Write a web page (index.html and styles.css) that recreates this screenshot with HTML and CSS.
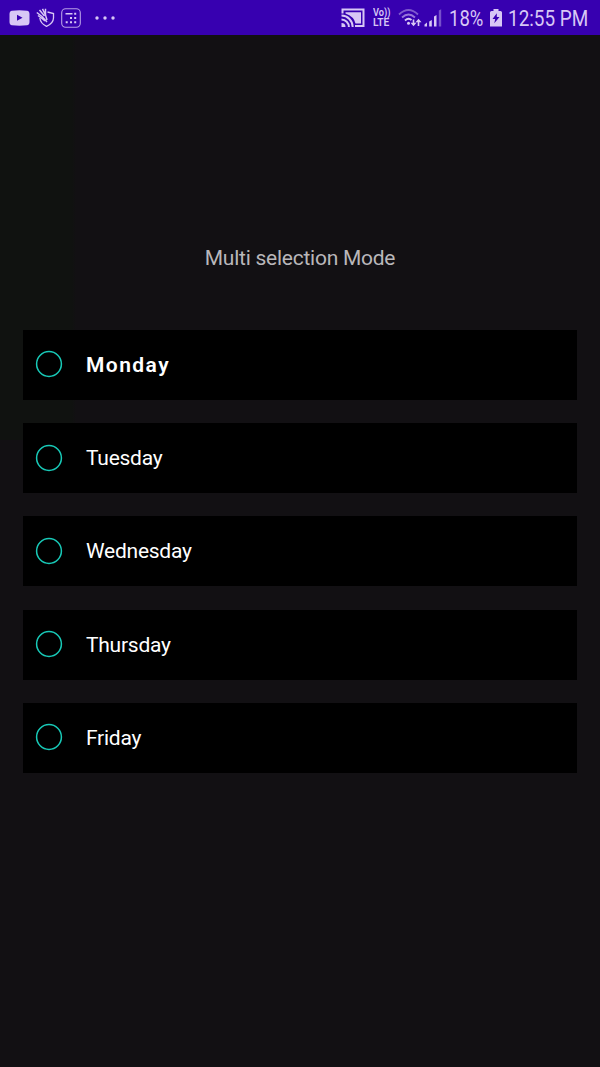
FILE: index.html
```html
<!DOCTYPE html>
<html lang="en">
<head>
<meta charset="utf-8">
<title>Multi selection Mode</title>
<link rel="stylesheet" href="styles.css">
</head>
<body>
<div class="screen">
  <header class="status">
    <div class="notifications">
      <svg class="icon" width="21" height="16" viewBox="0 0 21 16"><path fill="currentColor" fill-rule="evenodd" d="M3 .7Q10.500 0 18 .7Q20.500 1 20.500 4V12Q20.500 15 18 15.300Q10.500 16 3 15.300Q.5 15 .5 12V4Q.5 1 3 .7ZM8 4.800V10.800L13.500 7.800Z"/></svg>
      <svg class="icon shield" width="19" height="20" viewBox="0 0 19 20" fill="none" stroke="currentColor"><path stroke-width="1.300" d="M11.500 4L17.500 5.500V10Q17.300 15.500 10.500 18.300Q4.500 15.500 3.800 10"/><path stroke-width="1.500" d="M.8 4.500L6 8.500L11 14M3.500 2L8.500 8M6.500 .8L9.500 7L11 12M2 7.500L6 10.500L9 13M9.500 .8V7"/></svg>
      <svg class="icon grid" width="20" height="20" viewBox="0 0 20 20"><rect x=".7" y=".7" width="18.600" height="18.600" rx="4" fill="none" stroke="currentColor" stroke-width="1.100" opacity=".8"/><path fill="currentColor" d="M4.500 5H11.500V6.500H4.500ZM13.200 4.800H15.200V6.800H13.200ZM9 9H11V11H9ZM13.200 9H15.200V11H13.200ZM4.700 13.200H6.700V15.200H4.700ZM9 13.200H11V15.200H9ZM13.200 13.200H15.200V15.200H13.200Z"/></svg>
      <svg class="icon more" width="20" height="4" viewBox="0 0 20 4" fill="currentColor"><circle cx="2" cy="2" r="1.700"/><circle cx="10" cy="2" r="1.700"/><circle cx="18" cy="2" r="1.700"/></svg>
    </div>
    <div class="system">
      <svg class="icon" width="24" height="20" viewBox="0 0 24 20"><path fill="none" stroke="currentColor" stroke-width="2" d="M1.500 5.500V1.500H22.500V18H14"/><path fill="currentColor" d="M4.500 4.200H20V15.500H14.500Q13 8.500 4.500 5.500Z"/><g fill="none" stroke="currentColor" stroke-width="2"><path d="M.5 7.600A11.400 11.400 0 0 1 11.700 19"/><path d="M.5 11.500A7.500 7.500 0 0 1 7.900 19"/></g><path fill="currentColor" d="M.5 15A4 4 0 0 1 4.500 19H.5Z"/></svg>
      <div class="volte"><span class="vo">Vo))</span><span class="lte">LTE</span></div>
      <svg class="icon wifi" width="24" height="20" viewBox="0 0 24 20" fill="none" stroke="currentColor"><path opacity=".45" stroke-width="1.800" d="M1 6.500Q10.500-2.500 20 6.500"/><path stroke-width="1.800" opacity=".6" d="M4 9.500Q10.500 3.500 17 9.500"/><path stroke-width="1.900" d="M7 12.500Q10.500 9.200 13.500 12"/><circle cx="10.500" cy="15.300" r="1.500" fill="currentColor" stroke="none"/><path stroke-width="1.600" d="M15.500 11.500V17M20.500 18V12.500"/><path fill="currentColor" stroke="none" d="M12.500 14.800H18.500L15.500 18.300ZM17.500 14.200H23.500L20.500 10.700Z"/></svg>
      <svg class="icon signal" width="18" height="18" viewBox="0 0 18 18" fill="currentColor"><path d="M.5 15.500L3 13.500V17.500H.5ZM5.200 12.500L7.800 11V17.500H5.200ZM10 7.500L12.500 6V17.500H10Z"/><path opacity=".4" d="M14.800 1.500L17.200 .3V17.500H14.800Z"/></svg>
      <span class="percent">18%</span>
      <svg class="icon battery" width="12" height="18" viewBox="0 0 12 18"><path fill="currentColor" fill-rule="evenodd" d="M3.500 0H8.500V2H10.500Q12 2 12 3.500V17.500H0V3.500Q0 2 1.500 2H3.500ZM6.800 4.200L2.500 10H5.200L4.300 14.200L9.500 8H6.800Z"/></svg>
      <span class="clock">12:55 PM</span>
    </div>
  </header>
  <main class="content">
    <h1 class="title">Multi selection Mode</h1>
    <ul class="days">
      <li class="day active"><svg class="radio" viewBox="0 0 28 28"><circle cx="14" cy="14" r="12.400"/></svg><span>Monday</span></li>
      <li class="day"><svg class="radio" viewBox="0 0 28 28"><circle cx="14" cy="14" r="12.400"/></svg><span>Tuesday</span></li>
      <li class="day"><svg class="radio" viewBox="0 0 28 28"><circle cx="14" cy="14" r="12.400"/></svg><span>Wednesday</span></li>
      <li class="day"><svg class="radio" viewBox="0 0 28 28"><circle cx="14" cy="14" r="12.400"/></svg><span>Thursday</span></li>
      <li class="day"><svg class="radio" viewBox="0 0 28 28"><circle cx="14" cy="14" r="12.400"/></svg><span>Friday</span></li>
    </ul>
  </main>
</div>
</body>
</html>
```
FILE: styles.css
```css
* { box-sizing: border-box; }
body { margin: 0; font-family: Roboto, "Liberation Sans", sans-serif; background: #121013; }
.screen { height: 1067px; overflow: hidden; background: linear-gradient(90deg, #101210 0 72px, #121013 76px) 0 0 / 100% 440px no-repeat, #121013; }
.status { display: flex; justify-content: space-between; height: 35px; padding: 0 12px 0 9px; background: #3700b0; color: #d8c7f5; }
.notifications, .system { display: flex; align-items: center; height: 35px; }
.icon { display: block; flex: none; }
.shield { margin-left: 6px; }
.grid { margin-left: 6px; }
.more { margin-left: 14px; }
.volte { display: flex; flex-direction: column; width: 18px; margin-left: 8px; font-size: 10px; line-height: 10px; font-weight: 600; white-space: nowrap; }
.vo { transform: scaleX(.92); transform-origin: left; }
.lte { transform: scaleX(1.02); transform-origin: left; }
.wifi { margin-left: 7px; }
.signal { margin-left: 2px; }
.percent, .clock { flex: none; font-size: 21.5px; line-height: 35px; white-space: nowrap; transform-origin: left; padding-top: 2px; }
.percent { width: 34px; margin-left: 7px; transform: scaleX(.86); }
.battery { margin-left: 7px; }
.clock { width: 80px; margin-left: 6px; transform: scaleX(.88); }
.title { margin: 209px 0 0; text-align: center; font-size: 21px; line-height: 28px; font-weight: 400; letter-spacing: -.25px; color: #b9b7ba; }
.days { display: flex; flex-direction: column; gap: 23.3px; margin: 57.8px 23px 0; padding: 0; list-style: none; }
.day { display: flex; align-items: center; gap: 23px; height: 70px; padding-left: 12px; background: #000; color: #fff; font-size: 21px; letter-spacing: -.25px; }
.active { font-weight: 600; letter-spacing: 1.45px; }
.radio { width: 28px; height: 28px; fill: none; stroke: #18c9b7; stroke-width: 1.5; margin-bottom: 1px; }
```
